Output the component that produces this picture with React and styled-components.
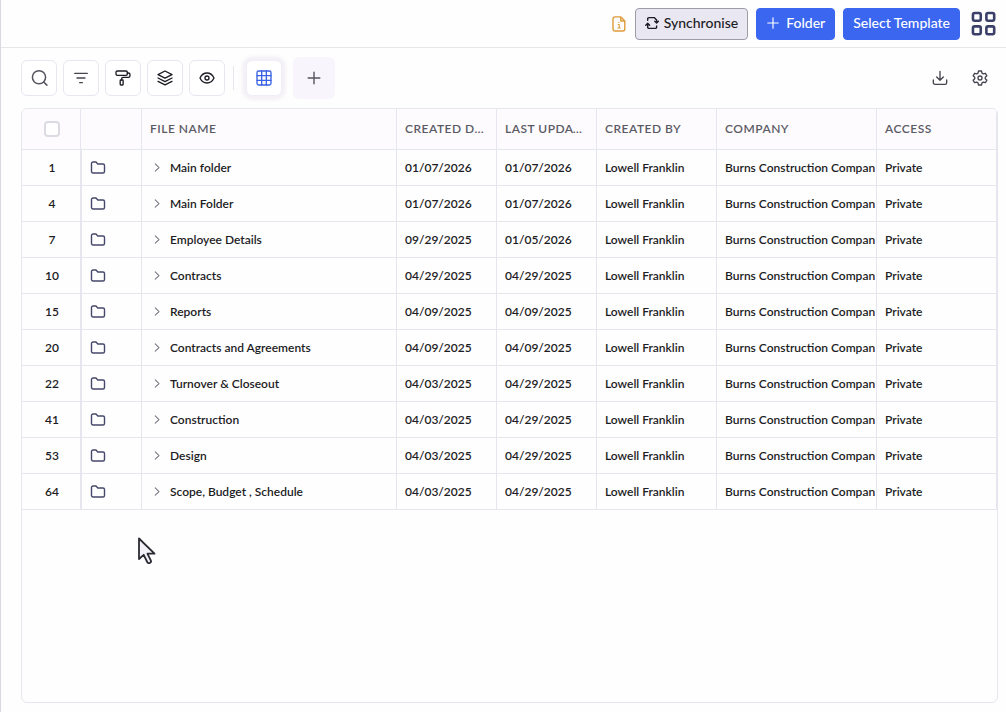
import React from 'react';
import styled, { createGlobalStyle } from 'styled-components';

const GlobalStyle = createGlobalStyle`
    * {
        box-sizing: border-box;
    }

    body {
        margin: 0;
        background: #fefefe;
        font-family: Lato, "Liberation Sans", sans-serif;
        color: #1c1c24;
    }

    button {
        font-family: inherit;
        cursor: pointer;
    }

    svg {
        display: block;
    }
`;

// table rows
const folderData = [
    { id: 1, name: "Main folder", created: "01/07/2026", updated: "01/07/2026" },
    { id: 4, name: "Main Folder", created: "01/07/2026", updated: "01/07/2026" },
    { id: 7, name: "Employee Details", created: "09/29/2025", updated: "01/05/2026" },
    { id: 10, name: "Contracts", created: "04/29/2025", updated: "04/29/2025" },
    { id: 15, name: "Reports", created: "04/09/2025", updated: "04/09/2025" },
    { id: 20, name: "Contracts and Agreements", created: "04/09/2025", updated: "04/09/2025" },
    { id: 22, name: "Turnover & Closeout", created: "04/03/2025", updated: "04/29/2025" },
    { id: 41, name: "Construction", created: "04/03/2025", updated: "04/29/2025" },
    { id: 53, name: "Design", created: "04/03/2025", updated: "04/29/2025" },
    { id: 64, name: "Scope, Budget , Schedule", created: "04/03/2025", updated: "04/29/2025" },
];

const Page = styled.div`
    position: relative;
    display: flex;
    flex-direction: column;
    min-height: 100vh;
    border-left: 1px solid #d9d9e0;
`;

const TopBar = styled.header`
    display: flex;
    align-items: center;
    justify-content: flex-end;
    gap: 8px;
    height: 48px;
    padding-right: 9px;
    border-bottom: 1px solid #e6e6ea;
`;

const ActionButton = styled.button`
    display: flex;
    align-items: center;
    gap: ${({ $primary }) => ($primary ? '6px' : '5px')};
    height: 32px;
    padding: 0 9px 2px;
    border: 1px solid ${({ $primary }) => ($primary ? '#3b66f0' : '#9c9ba6')};
    border-radius: 4px;
    background: ${({ $primary }) => ($primary ? '#3b66f0' : '#e9e7f1')};
    color: ${({ $primary }) => ($primary ? '#ffffff' : '#1c1c24')};
    font-size: 14px;
    line-height: 20px;
    font-weight: 500;
    white-space: nowrap;
`;

const PlainButton = styled.button`
    display: flex;
    align-items: center;
    justify-content: center;
    padding: 0;
    border: 0;
    background: none;
    color: ${({ $color }) => $color || '#45454f'};
`;

const FileInfoButton = styled(PlainButton)`
    margin-right: 1px;
`;

const AppsButton = styled(PlainButton)`
    margin-left: 3px;
`;

const ToolBar = styled.div`
    display: flex;
    align-items: center;
    justify-content: space-between;
    height: 60px;
    padding: 0 18px 0 20px;
`;

const ToolGroup = styled.div`
    display: flex;
    align-items: center;
    gap: ${({ $gap }) => $gap};
`;

const ToolButton = styled.button`
    display: flex;
    align-items: center;
    justify-content: center;
    width: 36px;
    height: 36px;
    padding: 0;
    border: 1px solid #e9e6f0;
    border-radius: 6px;
    background: #ffffff;
    color: ${({ $color }) => $color || '#1c1c24'};
`;

const Divider = styled.span`
    width: 1px;
    height: 24px;
    margin: 0 6px 0 2px;
    background: #e6e6ec;
`;

const ViewButton = styled(ToolButton)`
    border-color: #f1eef7;
    box-shadow: 0 0 0 2px #f4f1f7, 0 0 4px 3px #efebf3;
    color: #3a62e4;
`;

const AddViewButton = styled(ToolButton)`
    width: 42px;
    height: 42px;
    margin-left: 5px;
    border: 0;
    background: #f8f6fc;
    color: #55555f;
`;

const TablePanel = styled.main`
    flex: 1;
    margin: 0 8px 9px 20px;
    border: 1px solid #e6e6ef;
    border-radius: 6px;
    overflow: hidden;
`;

const FileTable = styled.table`
    width: 100%;
    table-layout: fixed;
    border-collapse: separate;
    border-spacing: 0;
`;

const HeadCell = styled.th`
    height: 41px;
    padding: 0 8px;
    border-right: 1px solid #e6e6ef;
    border-bottom: 1px solid #e6e6ef;
    background: #fdfbfd;
    color: #5a5a64;
    font-size: 12px;
    line-height: 16px;
    font-weight: 600;
    letter-spacing: 0.5px;
    text-align: left;
    white-space: nowrap;
    overflow: hidden;
    text-overflow: ellipsis;
`;

const CheckHeadCell = styled(HeadCell)`
    padding: 0 0 0 2px;
`;

const Cell = styled.td`
    height: 36px;
    padding: 0 1px 0 8px;
    border-right: 1px solid #e6e6ef;
    border-bottom: 1px solid #e6e6ef;
    font-size: 12px;
    line-height: 16px;
    font-weight: 600;
    white-space: nowrap;
`;

const NumberCell = styled(Cell)`
    padding: 0 0 0 2px;
    text-align: center;
`;

const IconCell = styled(Cell)`
    border-left: 1px solid #e6e6ef;
`;

const CellText = styled.div`
    overflow: hidden;
`;

const NameBox = styled.div`
    display: flex;
    align-items: center;
    gap: 6px;
`;

const CheckBox = styled.input`
    appearance: none;
    display: block;
    width: 16px;
    height: 16px;
    margin: 0 auto;
    border: 2px solid #dcdbe3;
    border-radius: 4px;
    background: #ffffff;
`;

const Pointer = styled.svg`
    position: absolute;
    left: 136px;
    top: 536px;
    pointer-events: none;
`;

const Icon = ({ size = 16, width = 2, children }) => (
    <svg width={size} height={size} viewBox="0 0 24 24" fill="none" stroke="currentColor"
        strokeWidth={width} strokeLinecap="round" strokeLinejoin="round" aria-hidden="true">
        {children}
    </svg>
);

const FileInfoIcon = () => (
    <svg width="14" height="16" viewBox="0 0 14 16" fill="none" stroke="currentColor"
        strokeWidth="1.4" strokeLinejoin="round" aria-hidden="true">
        <path d="M3 .9h5.8l4 4V13a2 2 0 0 1-2 2H3a2 2 0 0 1-2-2V2.9a2 2 0 0 1 2-2z" />
        <path d="M8.8 1v4h4" />
        <path d="M5.8 8.5H7.2V11.8M5.5 12h3.200M6.900 5.900v1.200" strokeWidth="1.1" />
    </svg>
);

// two open corners with an arrow head at each end
const SyncIcon = () => (
    <svg width="14" height="14" viewBox="0 0 14 14" fill="none" stroke="currentColor"
        strokeWidth="1.4" strokeLinejoin="round" strokeLinecap="round" aria-hidden="true">
        <path d="M2.7 4.300V2.800A1.200 1.200 0 0 1 3.900 1.600h5.300l2.400 2.400v2.300M9.800 5.200l1.800 1.800 1.800-1.800" />
        <path d="M11.6 9.900v1.300a1.200 1.200 0 0 1-1.200 1.200H3.900a1.200 1.200 0 0 1-1.200-1.200V7.900M.8 9.200l1.900-1.900 1.900 1.900" />
    </svg>
);

const FolderIcon = () => (
    <svg width="16" height="14" viewBox="0 0 16 14" fill="none" stroke="#45486a"
        strokeWidth="1.4" strokeLinejoin="round" role="img" aria-label="Folder">
        <path d="M1.500 2.500A1.500 1.500 0 0 1 3 1h3l1.800 2h5.200a1.500 1.500 0 0 1 1.500 1.500v6a1.500 1.500 0 0 1-1.500 1.500H3a1.500 1.500 0 0 1-1.500-1.500z" />
    </svg>
);

const TopActions = () => (
    <TopBar>
        <FileInfoButton $color="#e09a3a" aria-label="File information"><FileInfoIcon /></FileInfoButton>
        <ActionButton><SyncIcon />Synchronise</ActionButton>
        <ActionButton $primary>
            <Icon size={14}><path d="M12 3v18M3 12h18" /></Icon>
            Folder
        </ActionButton>
        <ActionButton $primary>Select Template</ActionButton>
        <AppsButton $color="#3b4068" aria-label="Apps">
            <Icon size={26} width={2.4}>
                <rect x="1.8" y="1.8" width="7.2" height="7.2" rx="1.6" />
                <rect x="14.2" y="1.8" width="7.2" height="7.2" rx="1.6" />
                <rect x="1.8" y="14.2" width="7.2" height="7.2" rx="1.6" />
                <rect x="14.2" y="14.2" width="7.2" height="7.2" rx="1.6" />
            </Icon>
        </AppsButton>
    </TopBar>
);

const Tools = () => (
    <ToolBar>
        <ToolGroup $gap="6px">
            <ToolButton $color="#55555f" aria-label="Search">
                <Icon size={18}><circle cx="12" cy="11" r="8.8" /><path d="m22.500 21.500-4.200-4.200" /></Icon>
            </ToolButton>
            <ToolButton $color="#45454f" aria-label="Filter">
                <Icon><path d="M2.500 5h19M6 12h12M10 19h4" /></Icon>
            </ToolButton>
            <ToolButton aria-label="Format">
                <Icon>
                    <rect x="1.500" y="1.500" width="17" height="6.500" rx="2" />
                    <path d="M18.500 4.500H20a2.500 2.500 0 0 1 2.500 2.500v1.500a2.500 2.500 0 0 1-2.500 2.500h-8a2 2 0 0 0-2 2v2" />
                    <rect x="7.800" y="15" width="4.400" height="7.500" rx="1" />
                </Icon>
            </ToolButton>
            <ToolButton aria-label="Layers">
                <Icon>
                    <path d="M12 1.500 1.500 6.800 12 12.100l10.500-5.300z" />
                    <path d="m1.500 12 10.500 5.300L22.500 12" />
                    <path d="m1.500 17 10.500 5.300L22.500 17" />
                </Icon>
            </ToolButton>
            <ToolButton aria-label="Visibility">
                <Icon>
                    <path d="M1.500 12S5 4.500 12 4.500 22.500 12 22.500 12 19 19.500 12 19.500 1.500 12 1.500 12z" />
                    <circle cx="12" cy="12" r="3" />
                </Icon>
            </ToolButton>
            <Divider />
            <ViewButton aria-label="Table view">
                <Icon>
                    <rect x="1.500" y="1.500" width="21" height="21" rx="2.500" />
                    <path d="M1.500 8.500h21M1.500 15.500h21M8.500 1.500v21M15.500 1.500v21" />
                </Icon>
            </ViewButton>
            <AddViewButton aria-label="Add view">
                <Icon size={14} width={2.4}><path d="M12 2v20M2 12h20" /></Icon>
            </AddViewButton>
        </ToolGroup>
        <ToolGroup $gap="24px">
            <PlainButton aria-label="Download">
                <Icon><path d="M2 15v4a2.500 2.500 0 0 0 2.500 2.500h15A2.500 2.500 0 0 0 22 19v-4M12 2v13M7 10.500l5 5 5-5" /></Icon>
            </PlainButton>
            <PlainButton aria-label="Settings">
                <Icon>
                    <path d="M9.800 1.500h4.400l.8 3.300 1.900 1.100 3.200-1 2.200 3.800-2.400 2.300v2l2.400 2.300-2.200 3.800-3.200-1-1.900 1.100-.8 3.300H9.800L9 19.200l-1.900-1.100-3.200 1-2.200-3.800L4.100 13v-2L1.700 8.700l2.200-3.800 3.200 1L9 4.800z" />
                    <circle cx="12" cy="12" r="3" />
                </Icon>
            </PlainButton>
        </ToolGroup>
    </ToolBar>
);

const FolderRow = ({ id, name, created, updated }) => (
    <tr>
        <NumberCell>{id}</NumberCell>
        <IconCell><FolderIcon /></IconCell>
        <Cell>
            <NameBox>
                <PlainButton $color="#74747f" aria-label={`Expand ${name}`}>
                    <Icon size={14} width={1.8}><path d="m9 5 6.500 6.200L9 17.400" /></Icon>
                </PlainButton>
                {name}
            </NameBox>
        </Cell>
        <Cell>{created}</Cell>
        <Cell>{updated}</Cell>
        <Cell>Lowell Franklin</Cell>
        <Cell><CellText>Burns Construction Company</CellText></Cell>
        <Cell>Private</Cell>
    </tr>
);

const App = () => (
    <Page>
        <GlobalStyle />
        <TopActions />
        <Tools />
        <TablePanel>
            <FileTable>
                <colgroup>
                    <col width="59" />
                    <col width="61" />
                    <col />
                    <col width="100" />
                    <col width="100" />
                    <col width="120" />
                    <col width="160" />
                    <col width="120" />
                </colgroup>
                <thead>
                    <tr>
                        <CheckHeadCell><CheckBox type="checkbox" aria-label="Select all" /></CheckHeadCell>
                        <HeadCell />
                        <HeadCell>FILE NAME</HeadCell>
                        <HeadCell>CREATED DATE</HeadCell>
                        <HeadCell>LAST UPDATED</HeadCell>
                        <HeadCell>CREATED BY</HeadCell>
                        <HeadCell>COMPANY</HeadCell>
                        <HeadCell>ACCESS</HeadCell>
                    </tr>
                </thead>
                <tbody>
                    {folderData.map((folder) => (
                        <FolderRow key={folder.id} {...folder} />
                    ))}
                </tbody>
            </FileTable>
        </TablePanel>
        <Pointer width="20" height="30" viewBox="0 0 20 30" aria-hidden="true">
            <path d="M2 2.500v20.500l4.700-4.200 3.500 7.200a1.800 1.800 0 0 0 3.600-1.600l-3.400-6.700h7.100z"
                fill="#f4f2f8" stroke="#2a2a32" strokeWidth="1.8" strokeLinejoin="round" />
        </Pointer>
    </Page>
);

export default App;
